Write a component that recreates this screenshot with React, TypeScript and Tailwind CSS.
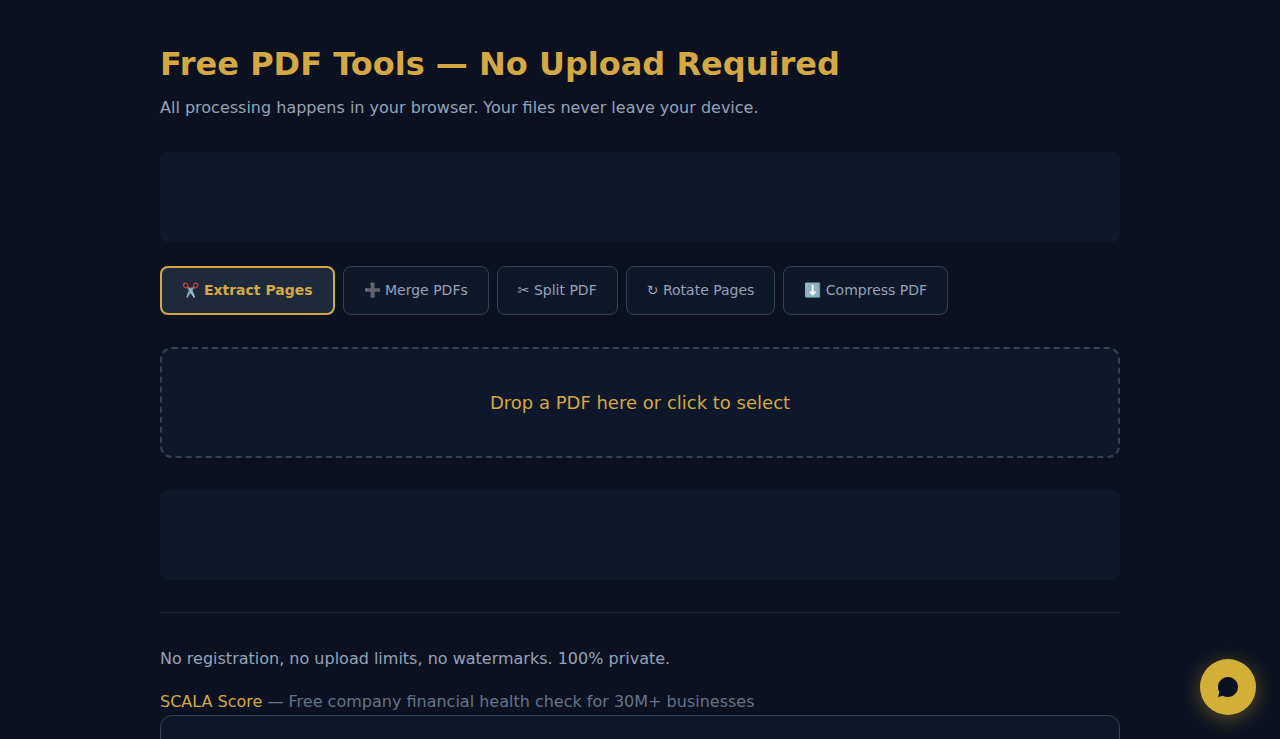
const tabs = [
  { icon: '✂️', label: 'Extract Pages', active: true },
  { icon: '➕', label: 'Merge PDFs', active: false },
  { icon: '✂', label: 'Split PDF', active: false },
  { icon: '↻', label: 'Rotate Pages', active: false },
  { icon: '⬇️', label: 'Compress PDF', active: false },
];

export default function App() {
  return (
    <div className="h-[739px] overflow-hidden bg-[#0b1120] font-['DejaVu_Sans',sans-serif] text-base text-[#94a3b8]">
      <main className="mx-auto w-[960px] pt-10">
        <h1 className="text-[32px] leading-[48px] font-bold text-[#d4a843]">Free PDF Tools — No Upload Required</h1>
        <p className="mt-2 leading-6">All processing happens in your browser. Your files never leave your device.</p>
        <div className="mt-8 h-[90px] rounded-lg bg-[#0f172a]" />
        <div className="mt-6 flex gap-2">
          {tabs.map((t) => (
            <button
              key={t.label}
              className={
                t.active
                  ? 'h-[49px] rounded-lg border-2 border-[#d4a843] bg-[#1e293b] px-5 pb-0.5 text-sm font-bold whitespace-nowrap text-[#d4a843]'
                  : 'h-[49px] rounded-lg border border-[#334155] bg-[#0f172a] px-5 pb-0.5 text-sm whitespace-nowrap'
              }
            >
              {t.icon} {t.label}
            </button>
          ))}
        </div>
        <div className="mt-8 flex h-[111px] items-center justify-center rounded-xl border-2 border-dashed border-[#334155] bg-[#0f172a] text-lg text-[#d4a843]">
          Drop a PDF here or click to select
        </div>
        <div className="mt-8 h-[90px] rounded-lg bg-[#0f172a]" />
        <footer className="mt-8 border-t border-[#1e293b] pt-8">
          <p className="leading-[27px]">No registration, no upload limits, no watermarks. 100% private.</p>
          <p className="mt-4 leading-[27px] text-[#64748b]">
            <a className="text-[#d4a843]">SCALA Score</a> — Free company financial health check for 30M+ businesses
          </p>
        </footer>
        <div className="h-40 rounded-xl border border-[#334155] bg-[#0f172a]" />
      </main>
      <button
        aria-label="Open chat"
        className="fixed right-6 bottom-6 flex size-14 items-center justify-center rounded-full bg-[#d4af37] shadow-[0_4px_20px_rgba(212,175,55,0.4)]"
      >
        <svg className="size-6" viewBox="0 0 24 24" fill="#0b1120">
          <path d="M12 2C6.48 2 2 6.48 2 12c0 1.85.5 3.58 1.37 5.07L2 22l4.93-1.37A9.96 9.96 0 0 0 12 22c5.52 0 10-4.48 10-10S17.52 2 12 2z" />
        </svg>
      </button>
    </div>
  );
}
